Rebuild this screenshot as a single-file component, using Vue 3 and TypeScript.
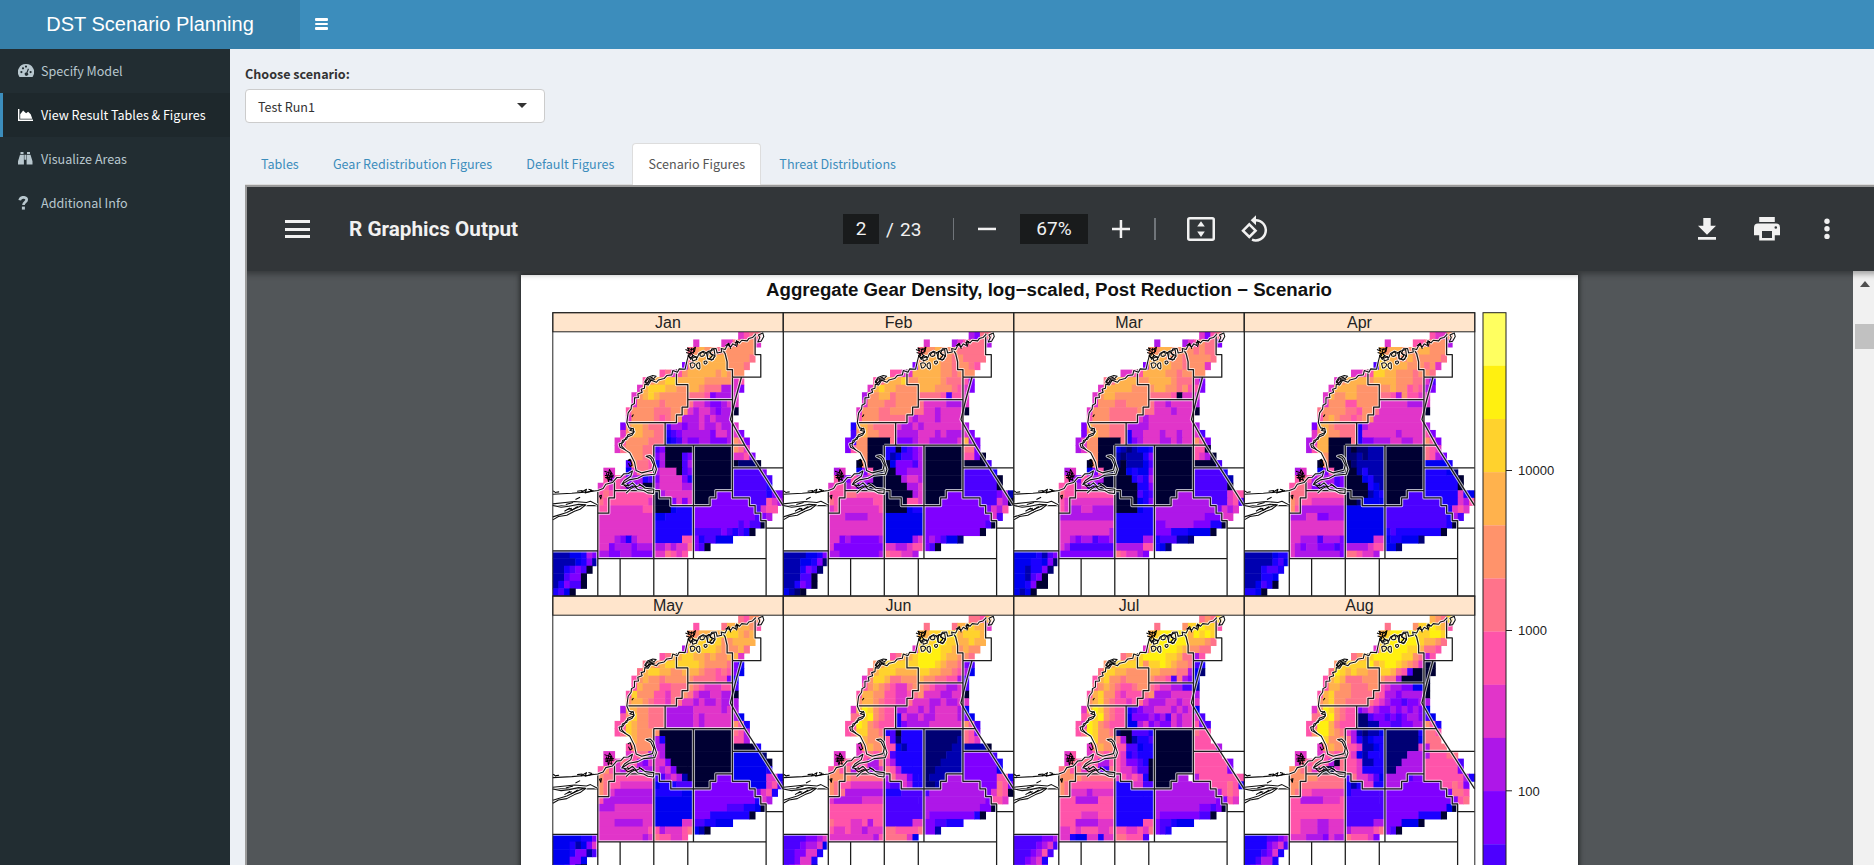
<script setup lang="ts">
interface Cell { x: number; y: number; w: number; fill: string }
interface Month { name: string; rows: string[] }

const CELL_W = 5.617
const CELL_H = 7.543

const palette: Record<string, string> = {
  '0': '#000033', '1': '#000074', '2': '#0000b0', '3': '#0000f0',
  '4': '#1c00ff', '5': '#4c00ff', '6': '#8000ff', '7': '#ae17e8',
  '8': '#e135c9', '9': '#ff54aa', A: '#ff738b', B: '#ff936b',
  C: '#ffb24d', D: '#ffd22d', E: '#fff010', F: '#ffff60',
}

// One string per grid row; every token is "first column : density class per cell".
const months: Month[] = [
  { name: 'Jan', rows: [
    '33:89AA', '25:8 30:88ABBB8', '24:ABCBBABBBBBB', '24:ACCCCCCBBBBA', '23:6BCCCCCCBBBA',
    '19:9A89BCCCCCBCBBB', '16:9BCCDDCCCCCBBBBB89', '15:8CDDDCCBBCCBAAA7786', '14:8BCDCBBBBBAAA967778',
    '14:8BBBBABBBBA88766788', '13:9BBBBAAABBB878876770', '13:8BBBBA9ABB777878777',
    '12:6BCCBAAA5776778778778', '12:8BCCBBAA45677777688786', '11:89BBBBAAA345766776667BA6',
    '11:8ABBBAA56000000000000BA8', '14:BBAA67000560000000889 35:6', '13:5BAA947000570000000 32:01110',
    '9:88 13:38AA978880560000000555556', '9:97986774568888640000000555555 38:5',
    '8:898986670078888770000000555555 38:4', '8:9A999999990788888 25:0000666555555466',
    '8:A9999999980006868 25:0006666666555987', '8:99888888990003444 25:666666666665899',
    '8:88888888883344444 25:66666666666567', '8:88888888884444444 25:6666666656550',
    '8:88888888884444444 25:55555654540', '8:88876478884444499 25:6455333', '8:8867776777778788A 25:650',
    '0:22233476 8:776677666688A989', '0:22223462', '0:2245650', '0:225660', '0:246550', '0:4530' ] },
  { name: 'Feb', rows: [
    '33:76AA', '25:8 30:789AAA7', '24:ABBCBBBAAAAA', '24:BCCCBBABAAAA', '23:6CCCCBBABBA9',
    '19:9988CCCCCBBABBB', '16:9ACCCDBBCCCCBAAA96', '15:8CDCCBBBBCCCBBBA986', '14:7BBCCABBBBAAAA95998',
    '14:8BBBAABBBBA88887778', '13:8BBBAABBBBAA88788880', '13:9BBBAAAAA8788878888',
    '12:4CCBAAAA8778788888887', '12:5BCBBAAA77778887877786', '11:65BB0000A666788777778C76',
    '11:69BB0004404567 25:0000000AA6', '14:B0004235567 25:00000009960', '13:0B0000366657 25:000000000005',
    '9:78 13:369000066777 25:0000000555554', '9:9769877000007887 25:00000005555550',
    '8:89978660000000778 25:00000005555550', '8:999AA999990000078 25:0000666555555672',
    '8:A9888888990000998 25:0006666666555870', '8:89888888890000344 25:666666666666879',
    '8:88877778883333333 25:66666666666685', '8:88888888883333333 25:6666666666650',
    '8:88888888883333333 25:66666666660', '8:88676666673333378 25:6765331', '8:86666666668877899 25:650',
    '0:22223346 8:7766666667A99887', '0:22233461', '0:2224651', '0:222550', '0:224650', '0:3210' ] },
  { name: 'Mar', rows: [
    '33:869A', '25:7 30:789BAA6', '24:BBCCBBBBABAA', '24:CCCBBBABBBBA', '23:6CCCCBBABBB8',
    '19:8899CCCCBBABBBB', '16:AACCCCBBCCCCBAAA86', '15:8CCCCCBBBBCCBBAB996', '14:8BCCBBBBBBAAAA90888',
    '14:8BBBAABBBBA88788887', '13:8BBBAAAAABAA88878880', '13:9BBBAAAAA8788888888',
    '12:6CBBBAAA7777888888887', '12:6BCBBAAA47788878878885', '11:78BB0000A467888778788B96',
    '11:78BB0003212334 25:0000000990', '14:B0002122246 25:00000009870', '13:0B0001022235 25:000000000005',
    '9:78 13:369000034336 25:0000000555554', '9:9769877000004547 25:00000005555552',
    '8:99978660000000446 25:00000005555550', '8:A999999999000054 24:50000777555555899',
    '8:9888888888000034 24:60007777777555895', '8:98778877770000344 25:777777777776878',
    '8:77777777774444444 25:77777777766688', '8:88888888884444444 25:6677777666440',
    '8:88888888874444444 25:66644433330', '8:88767756674444477 25:4555221', '8:87555555557777799 25:431',
    '0:33334256 8:6666666666A98876', '0:33344361', '0:3324461', '0:332560', '0:334600', '0:3230' ] },
  { name: 'Apr', rows: [
    '33:988B', '25:8 30:99ABBB7', '24:CBCCBBBCCBBB', '24:DCCBBCBBBBBA', '23:5DDCCCBBBAB8',
    '19:8899DDCCBBBABBA', '16:8BCCCCBCCCCBBBAA85', '15:8CCCCBBBBBBCBB9A976', '14:8CBBCCBBBBAA97B9988',
    '14:8BBB99BBBB888887778', '13:ABBBBAA9BBA888888880', '13:9BCBAA9ABB888888888',
    '12:6CCBAAAA4788888888887', '12:8BCBBAAA48888887888896', '11:78CC0000A466777887788B96',
    '11:79CC0001011222 25:0000000A98', '14:B0001121222 25:0000000A976', '13:0B0000122222 25:000000033334',
    '9:78 13:369000024222 25:0000000444431', '9:9A97877560003422 25:00000004444440',
    '8:9AA86667560000432 25:00000004444440', '8:AAA9999999000023 24:40000555444444843',
    '8:BA99888888001333 24:30005555555444879', '8:B9777777773333333 25:555555555554898',
    '8:77788667773333333 25:55555555555475', '8:88888888883333333 25:5555555555540',
    '8:88888888883333333 25:45444444440', '8:88777577763333388 25:3443331', '8:87677666567777899 25:331',
    '0:22222344 8:8777777776AA9887', '0:22222453', '0:2224554', '0:222443', '0:223540', '0:4430' ] },
  { name: 'May', rows: [
    '33:A9BB', '25:9 30:ACCCCB9', '24:BBCCCCDDDCBC', '24:CDDDDDBBCCCC', '23:7DDDDDCBBBCA',
    '19:9ACCDDCCBCBBCC8', '16:ACBCDDDDDDCBBBBA64', '15:ACDDCCBBCCCBAA9A963', '14:9BCBBABBBBBAAAA9964',
    '14:9CBBB99AAABA9888995', '13:9DBBB998AABA87788770', '13:BCCBA998AA8878778777',
    '12:7CCBBAAA7777788888787', '12:9BDBBAAA77777878888873', '11:99DCBBAAA777778788888B94',
    '11:9ADCBBBB000000 25:0000000A97', '14:CBBB7400000 25:0000000997', '13:9BBBB7700000 25:000000000004',
    '9:88 13:89AA78700000 25:0000000333331', '9:898A99768886000 24:000000003333330',
    '8:9B98798777878600 24:000000003333334', '8:BAA9999999557872 24:00000666333333884',
    '8:BA99888888344455 24:50006666666333895', '8:BA8777777744444 23:3366666666666689 39:4',
    '8:977777777733333 23:3366666666666487', '8:77788888883333333 25:6666665554430',
    '8:88888888883333333 25:66644444440', '8:88877777883333388 25:5544333', '8:8888888889978889A 25:320',
    '0:33333446 8:8888888878A99889', '0:33342368', '0:33346625', '0:333663', '0:334620', '0:4430' ] },
  { name: 'Jun', rows: [
    '33:AA9C', '25:A 30:ACCDCC8', '24:CCDDDDECDDDC', '24:DDDEEDDCCDCC', '23:8DEEEDDCBCBB',
    '19:9ACCDEEEEDCCBBA', '16:BCDDDDDDEEEDCBBA65', '15:ACDDDCCCCDDCCBBA973', '14:8BDDCAABBBCBBAA9975',
    '14:9BCBA988ABBA9887785', '13:9CCBB99889AB88877880', '13:BCCBA9988A8887787788',
    '12:8CEDBA997788787888873', '12:AADEBA9948778778888763', '11:99EDBA999467777888888B95',
    '11:9ADDBBA4504444 25:1111111A96', '14:CBBB9514444 25:1111112A98', '13:8BCBB9932444 25:111112222220',
    '9:88 13:89A9A9544444 25:1111222666665', '9:8A9A9977A87444 23:441112222666666 38:4',
    '8:9B9A799778A9744 23:441122222666666 38:3', '8:BBBBAAAAAA7A8864 24:41222777666666994',
    '8:BA99888888655874 24:41127777777666A96', '8:BAA777777744455555 26:777777777768A9 40:0',
    '8:8777778888555555 24:5777777777776998', '8:99999999995555555 25:7777777777 35:660',
    '8:99999999995555555 25:76666666640', '8:A9998897995555588 25:6655444', '8:9889887888AA9999A 25:662',
    '0:55556678 8:8888888879AAAA83', '0:55567783', '0:5566884', '0:556884', '0:567882', '0:6642' ] },
  { name: 'Jul', rows: [
    '33:ABAD', '25:A 30:BDDEDD9', '24:CDEEDEECEDED', '24:DEEEEEECCCBA', '23:8DEEEEDCBBAA',
    '19:ABCDEEEEDDCAA79', '16:BCDDDDDBDDEDCBBA54', '15:ADDCCBBBBCCBBBAA731', '14:9CDBBABBBBBAA95A763',
    '14:ABCBA99ABBA98877552', '13:9CDBB98999AB77788887', '13:BCDBA9989A8777887888',
    '12:8CEDBA994567788878783', '12:9ADEBA993666767587888 33:5', '11:98EDBA999337867668788965',
    '11:9AEDBBA100555 24:40000000A99', '14:DBBBA702445 25:0000000999', '13:8BCBB9955344 25:00000009999 36:7',
    '9:89 13:89A9A984545 23:44000000099999', '9:8A9AA977998665 23:400000000999999 38:6',
    '8:AB9A89965A988755 24:00000000999999 38:6', '8:BBBBAAAAAA898984 24:0000077 32:799999999',
    '8:BA99999999444885 24:50007777777999A94', '8:BA8887888844444 23:447777777777779A 39:9',
    '8:9997777999444444 24:4777777777776698', '8:99999999994444444 25:7777777766 35:560',
    '8:99998889994444444 25:76666666550', '8:99977778884444499 25:6554333', '8:8898999889998898A 25:654',
    '0:55555667 8:8843388488AA9995', '0:55556785', '0:5556795', '0:556784', '0:557785', '0:4444' ] },
  { name: 'Aug', rows: [
    '33:CBAD', '25:A 30:BDDEDC9', '24:CDEEDEEDDEED', '24:DEEEEEEDCCBA', '23:8DEEEEDDCAA9',
    '19:ABCDEEEEEDDBA79', '16:BDDDDDECDEEDCBA800', '15:AEDCDCCBBDDCA950000', '14:9CDCAAABBBBAA700000',
    '14:9CCBBAAABB987766330', '13:9CDBBBAAAAA977677770', '13:BCDBBAAAAA9876656677',
    '12:8BEDBA99678766767676 32:3', '12:AADEBA9911566565677653', '11:99EECA999112266556677B94',
    '11:9BEECBA872122 24:31111114AA9', '14:DBBBA742344 25:1111113AAA', '13:8BCBB9982233 24:411111187AAA',
    '9:88 13:89A9A983244 24:411117777999AA', '9:8A9AA970A99822 23:441117777999999 38:5',
    '8:BBAA89008A99844 23:441177777999999 38:6', '8:BBBBBAAAAA5A8875 24:37777566999999974',
    '8:BBAAAAAAAA42488 23:44777666666699A96', '8:BA99888888455555 24:5666666666666AA9',
    '8:9977778889555555 24:566666666666669A', '8:99999999995555555 25:6666666666630',
    '8:99999999995555555 25:66666644440', '8:99888778885555577 25:6663330', '8:9988877888788889A 25:650',
    '0:44445567 8:8887776877A99986', '0:44446785', '0:4445684', '0:445774', '0:456773', '0:4442' ] },
]

function toCells(rows: string[]): Cell[] {
  const cells: Cell[] = []
  rows.forEach((row, r) => {
    for (const token of row.split(' ')) {
      const [start, classes] = token.split(':')
      let i = 0
      while (i < classes.length) {
        let j = i + 1
        while (j < classes.length && classes[j] === classes[i]) j++
        cells.push({
          x: (Number(start) + i) * CELL_W,
          y: r * CELL_H,
          w: (j - i) * CELL_W + 0.5,
          fill: palette[classes[i]],
        })
        i = j
      }
    }
  })
  return cells
}

const panels = months.map((m, i) => ({
  name: m.name,
  x: 552.8 + (i % 4) * 230.5,
  y: i < 4 ? 312.7 : 596.1,
  cells: toCells(m.rows),
}))

const legend = ['F', 'E', 'D', 'C', 'B', 'A', '9', '8', '7', '6', '5'].map((k, i) => ({
  y: 312.7 + i * 53.15,
  fill: palette[k],
}))
const ticks = [
  { y: 470.5, label: '10000' },
  { y: 630.5, label: '1000' },
  { y: 790.8, label: '100' },
]

const zones = [
  'M23 752H158V887M158 571V775H663M225 775V887M326 435V887M428 775V887M663 887V661H647V639H630V616H613V593H562V231',
  'M158 639H191V593H208V571H326M208 571V545M326 571H343V593H377V616H495V593H512V571H562',
  'M445 435V775M326 435H599M360 435V367M245 367H394V344H411V321H428V253H394V208M428 298H562',
  'M562 231H647V163H630V100M562 231V208H546V185L540 160L532 148M562 503H714M663 684H714M23 616H158M589 231L570 300L556 358L600 437L714 616',
]
const coast = [
  'M632 102L622 112L611 115L606 122L590 120L583 128L574 121L572 136L563 131L557 140L547 134L540 148L528 145L530 155L516 158L513 145L500 146L495 160L508 166L504 178L488 176L484 158L474 153L462 160L456 173L444 166L437 178L430 165L425 184L420 207L402 206L397 216L383 211L380 224L365 226L357 235L340 239L334 246L318 240L309 254L299 252L298 264L288 267L291 276L278 281L280 292L268 293L268 310L259 315L258 326L249 338L245 367L252 383L265 386L266 397L248 404L245 416L232 421L229 437L240 449L254 458L268 486L273 511L290 518L322 510L326 494L317 475L303 468L315 466L324 475L329 492L334 507L329 522L295 525L278 534L252 539L230 553L238 541L257 528L262 512L250 520L236 521L227 531L215 532L202 547L182 552L174 565L158 571L129 575L80 579L23 582',
  'M232 553L250 557L262 548L274 560L286 554L300 564L326 567L325 580L308 578L296 571L279 568L269 559L256 566L243 579',
  'M23 611L60 607L88 604L124 607L136 603L157 614M23 659L40 649L65 645L88 633L105 627L122 614L100 612L72 618L48 621L23 616M23 650L65 637L90 625L118 613',
  'M265 383L254 390L267 394L261 404L243 412L234 427L222 431L225 441L241 449M308 251L299 244L307 232L323 226L333 228L327 234L312 238L309 248',
  'M640 104L653 98L656 109L648 123L638 125L644 112ZM456 190Q465 183 464 197Q466 209 459 205Q451 198 456 190ZM477 184Q486 180 486 187Q481 195 477 188ZM435 190Q444 184 450 192Q448 204 438 203ZM469 157Q480 153 477 166Q466 172 464 163ZM489 154L507 148L510 168L500 180L487 174ZM441 174L453 169L455 178L443 182Z',
]
const detail = [
  'M421 148L433 153L427 143L440 149L451 141L448 154L438 158L444 167L436 173L429 167L433 160L423 157M440 143L434 168M446 145L445 160M299 248L308 236L323 230M302 250L315 241L329 238M178 513L201 521L193 508L189 526L204 530L181 532L202 541M184 519L190 544L197 518L199 543M179 526L206 525M58 633L73 624L80 630L98 619M65 629L80 624M91 598L105 591M62 613L84 607M96 573L112 571M107 577L124 567L120 578L145 571M130 567L139 569L133 575M163 587L169 585L167 596ZM265 343L260 350M237 555L247 563M247 565L267 557M281 551L295 560M24 572L33 578M33 576L42 575M246 551L252 556M248 481L255 477L261 495L255 499L250 489M569 128L579 124L574 140M480 160L491 153L502 166L493 176M541 137L551 129L557 146',
]
</script>

<template>
  <div class="app">
    <header class="header">
      <div class="logo">DST Scenario Planning</div>
      <div class="toggle"><i></i><i></i><i></i></div>
    </header>
    <div class="main">
      <nav class="sidebar">
        <div class="item">
          <svg class="ico" viewBox="0 0 16 14"><path fill="currentColor" fill-rule="evenodd" d="M8 0a8 8 0 0 1 6.800 12.400Q14.500 13 14 13H2q-.5 0-.8-.6A8 8 0 0 1 8 0zM3.400 7a1.100 1.100 0 1 0 0 2.200 1.100 1.100 0 0 0 0-2.200zM5 3.200a1.100 1.100 0 1 0 0 2.200 1.100 1.100 0 0 0 0-2.200zM8 1.500a1.100 1.100 0 1 0 0 2.200 1.100 1.100 0 0 0 0-2.200zM12.600 7a1.100 1.100 0 1 0 0 2.200 1.100 1.100 0 0 0 0-2.200zM9.900 4.500 8.400 8.400a1.700 1.700 0 1 0 1.100.4l1.500-3.900z"/></svg>
          <span>Specify Model</span>
        </div>
        <div class="item active">
          <svg class="ico" viewBox="0 0 16 14"><path fill="currentColor" d="M0 1h1.400v10.600H15V13H0zM2.200 10.800V6.200L5.100 2.500l3 2.700 2-1.500 2.600 2.500 1.600 4.600z"/></svg>
          <span>View Result Tables &amp; Figures</span>
        </div>
        <div class="item">
          <svg class="ico" viewBox="0 0 16 14"><path fill="currentColor" d="M2.500 0h3v2h-3zM9 0h3v2H9zM2 2.700h3.900v9.800H0V9.300zM8.600 2.700h3.900l2 6.600v3.200H8.600zM6.400 2.700h1.700v5H6.400z"/></svg>
          <span>Visualize Areas</span>
        </div>
        <div class="item">
          <svg class="ico" viewBox="0 0 16 14"><path fill="none" stroke="currentColor" stroke-width="2.700" d="M1.700 4.300C2.200 2 3.400 1.300 5.200 1.300c2.200 0 3.500 1 3.500 2.500 0 2.300-3.200 2.200-3.200 5.300"/><path fill="currentColor" d="M3.900 10.600h3V13.600h-3z"/></svg>
          <span>Additional Info</span>
        </div>
      </nav>

      <section class="content">
        <label class="label">Choose scenario:</label>
        <div class="select"><span>Test Run1</span><b class="caret"></b></div>
        <div class="tabs">
          <a>Tables</a><a>Gear Redistribution Figures</a><a>Default Figures</a><a class="on">Scenario Figures</a><a>Threat Distributions</a>
        </div>

        <div class="viewer">
          <div class="bar">
            <div class="left">
              <div class="burger"><i></i><i></i><i></i></div>
              <div class="title">R Graphics Output</div>
            </div>
            <div class="center">
              <span class="box page-no">2</span><span class="slash">/</span><span class="total">23</span>
              <span class="sep"></span>
              <svg class="sign minus" viewBox="0 0 18 18"><path d="M0 7.700h18v2.500H0z"/></svg>
              <span class="box zoom">67%</span>
              <svg class="sign plus" viewBox="0 0 18 18"><path d="M0 7.700h7.700V0h2.500v7.700H18v2.500h-7.800V18H7.700v-7.800H0z"/></svg>
              <span class="sep second"></span>
              <svg class="fit" viewBox="0 0 28 24"><rect x="1.250" y="1.250" width="25.500" height="21.500" rx="1.500" fill="none" stroke="#f1f1f1" stroke-width="2.500"/><path d="M14 4.200 17.800 9.500H10.200zM14 20 17.800 14.600H10.200z"/></svg>
              <svg class="rotate" viewBox="0 0 28 28"><path fill="none" stroke="#f1f1f1" stroke-width="2.500" d="M8.300 9.300 14.600 15.700 8.300 22 2 15.700zM14.500 5.200A10.100 10.100 0 1 1 11 24.700"/><path d="M15 .2v10L9.700 5.200z"/></svg>
            </div>
            <div class="right">
              <svg class="download" viewBox="0 0 18 22"><path d="M5.300 0h7.400v7.700H18l-9 9-9-9h5.300zM0 19h18v2.700H0z"/></svg>
              <svg class="print" viewBox="0 0 26 24"><path fill-rule="evenodd" d="M5.200 0h15.600v5H5.200zM4 6.500h18a4 4 0 0 1 4 4v7.700h-5.200V23.500H5.200v-5.300H0v-7.700a4 4 0 0 1 4-4zM8 14v7h10v-7zM21.800 9.200a1.300 1.300 0 1 0 0 2.600 1.300 1.300 0 0 0 0-2.600z"/></svg>
              <svg class="dots" viewBox="0 0 6 22"><circle cx="3" cy="3.200" r="2.700"/><circle cx="3" cy="10.800" r="2.700"/><circle cx="3" cy="18.400" r="2.700"/></svg>
            </div>
          </div>
          <div class="doc">
            <div class="sheet">
              <svg class="plot" viewBox="521 275 1057 590" width="1057" height="590" font-family="'Liberation Sans', Arial, sans-serif">
                <text x="1049" y="296" text-anchor="middle" font-weight="bold" font-size="18" fill="#111" textLength="566" lengthAdjust="spacingAndGlyphs">Aggregate Gear Density, log−scaled, Post Reduction − Scenario</text>
                <g v-for="p in panels" :key="p.name" :transform="`translate(${p.x} ${p.y})`">
                  <g transform="translate(0 19.200)">
                    <rect v-for="(c, k) in p.cells" :key="k" :x="c.x" :y="c.y" :width="c.w" height="8.050" :fill="c.fill" />
                    <g transform="scale(.3333) translate(-23 -95)" fill="none" stroke-linejoin="round">
                      <path v-for="d in zones" :key="'h' + d" :d="d" stroke="#fff" stroke-opacity=".7" stroke-width="9.500" />
                      <path v-for="d in zones" :key="d" :d="d" stroke="#1c1c1c" stroke-width="3.800" />
                      <path v-for="d in coast" :key="'h' + d" :d="d" stroke="#fff" stroke-opacity=".8" stroke-width="9" />
                      <path v-for="d in coast" :key="d" :d="d" stroke="#111" stroke-width="3.200" />
                      <path v-for="d in detail" :key="d" :d="d" stroke="#000" stroke-width="3.100" />
                    </g>
                  </g>
                  <rect width="230.500" height="19.100" fill="#ffe5cc" stroke="#222" />
                  <rect width="230.500" height="283.400" fill="none" stroke="#222" />
                  <text x="115.200" y="15.400" text-anchor="middle" font-size="16" fill="#222">{{ p.name }}</text>
                </g>
                <rect v-for="l in legend" :key="l.y" x="1483" :y="l.y" width="23" height="53.300" :fill="l.fill" />
                <rect x="1483" y="312.700" width="23" height="700" fill="none" stroke="#222" />
                <g v-for="t in ticks" :key="t.label">
                  <path :d="`M1506 ${t.y}h6`" stroke="#222" />
                  <text x="1518" :y="t.y + 4.700" font-size="13" fill="#222">{{ t.label }}</text>
                </g>
              </svg>
            </div>
            <div class="scroll"><b class="up"></b><b class="thumb"></b></div>
          </div>
        </div>
      </section>
    </div>
  </div>
</template>

<style>
html, body { overflow: hidden; }
</style>

<style scoped>
.app { width: 1874px; height: 865px; overflow: hidden; display: flex; flex-direction: column; background: #ecf0f5; font-family: "Source Sans Pro", "Noto Sans CJK SC", sans-serif; font-size: 12.570px; color: #333; }
.app * { box-sizing: border-box; }
.header { height: 49px; flex: none; display: flex; background: #3c8dbc; color: #fff; }
.logo { width: 300px; background: #367fa9; text-align: center; font: 20px/48px "Liberation Sans", Arial, sans-serif; }
.toggle { display: flex; flex-direction: column; gap: 2px; padding: 18px 15px; }
.toggle i { width: 13px; height: 2.700px; background: #fff; border-radius: 1px; }
.main { flex: 1; display: flex; min-height: 0; }
.sidebar { width: 230px; flex: none; background: #222d32; }
.item { height: 44px; display: flex; align-items: center; border-left: 3px solid transparent; padding-left: 15px; color: #b8c7ce; line-height: 20px; white-space: nowrap; }
.item.active { background: #1e282c; border-color: #3c8dbc; color: #fff; }
.ico { width: 16px; height: 14px; margin-right: 7px; flex: none; }
.content { flex: none; width: 1659px; padding-left: 15px; }
.label { display: block; margin-top: 15px; height: 25px; line-height: 19px; font-weight: 700; }
.select { width: 300px; height: 34px; background: #fff; border: 1px solid #ccc; border-radius: 4px; display: flex; align-items: center; justify-content: space-between; padding: 0 17px 0 12px; }
.caret { border: 5px solid transparent; border-top-color: #333; border-bottom: 0; margin-top: -2px; }
.tabs { margin-top: 20px; height: 42px; display: flex; border-bottom: 1px solid #ddd; }
.tabs a { height: 42px; border: 1px solid transparent; border-bottom: 0; padding: 0 15px; margin-right: 2.200px; line-height: 39px; color: #3c8dbc; border-radius: 4px 4px 0 0; white-space: nowrap; }
.tabs a.on { background: #fff; border-color: #ddd; color: #555; }
.viewer { height: 700px; width: 1644px; border: 2px solid #9a9a9a; font-family: Roboto, sans-serif; color: #f1f1f1; display: flex; flex-direction: column; overflow: hidden; }
.bar { height: 84px; flex: none; background: #323639; display: flex; align-items: center; box-shadow: 0 0 6px 3px rgba(0, 0, 0, .35); position: relative; z-index: 1; }
.bar svg { fill: #f1f1f1; display: block; flex: none; }
.left { width: 596px; display: flex; align-items: center; padding-left: 38px; }
.burger { width: 25px; display: flex; flex-direction: column; gap: 4.500px; }
.burger i { height: 3px; background: #f1f1f1; }
.title { margin-left: 39px; font-size: 20.700px; font-weight: 700; white-space: nowrap; }
.center { width: 855px; display: flex; align-items: center; font-size: 19px; }
.box { height: 30px; line-height: 30px; background: #191b1c; text-align: center; }
.page-no { width: 36px; }
.slash { margin-left: 7px; width: 14px; }
.total { width: 53px; }
.sep { width: 1px; height: 22px; background: #70757a; }
.sign { width: 18px; height: 18px; }
.minus { margin-left: 24px; }
.zoom { width: 68px; margin-left: 24px; }
.plus { margin-left: 24px; }
.second { margin-left: 24px; width: 2px; }
.fit { width: 28px; height: 24px; margin-left: 31px; }
.rotate { width: 28px; height: 28px; margin-left: 26px; }
.right { display: flex; align-items: center; }
.download { width: 18px; height: 22px; }
.print { width: 26px; height: 24px; margin-left: 38px; }
.dots { width: 6px; height: 22px; margin-left: 44px; }
.doc { flex: 1; display: flex; background: #525659; }
.sheet { margin: 4px 0 0 274px; width: 1057px; background: #fff; box-shadow: 0 0 5px 1px rgba(0, 0, 0, .6); flex: none; }
.plot { display: block; }
.scroll { margin-left: 275px; width: 21px; flex: none; background: #f1f1f1; display: flex; flex-direction: column; }
.up { margin: 10px 0 0 7px; width: 0; border: 5.500px solid transparent; border-top: 0; border-bottom: 6px solid #505050; }
.thumb { margin: 37px 0 0 2px; width: 19px; height: 25px; background: #c1c1c1; }
</style>
